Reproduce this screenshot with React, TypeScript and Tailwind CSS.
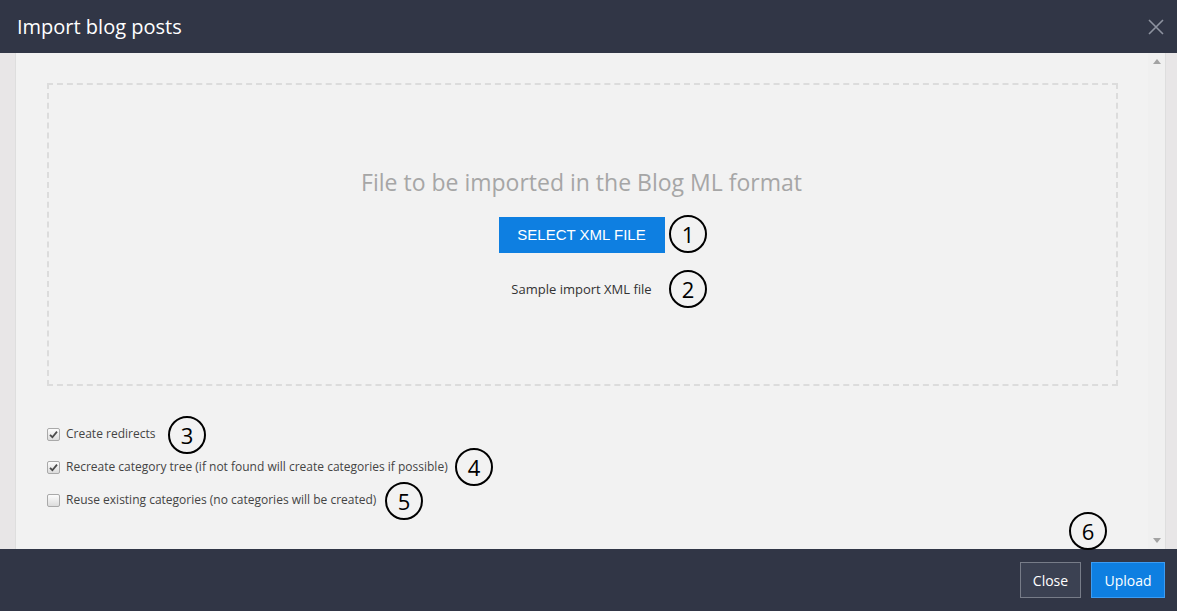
import React from 'react';

const Marker = ({ n, x, y }: { n: number; x: number; y: number }) => (
  <div
    className="absolute w-[38px] h-[38px] rounded-full border-2 border-black flex items-center justify-center text-[22px] text-black leading-none pointer-events-none"
    style={{ left: x - 19, top: y - 19 }}
  >
    {n}
  </div>
);

const Check = ({ checked, label }: { checked: boolean; label: string }) => (
  <label className="flex items-center h-[20px]">
    <span className="w-[13px] h-[13px] rounded-[2px] border border-[#a9a9a9] bg-gradient-to-b from-[#fcfcfc] to-[#dcdcdc] flex items-center justify-center">
      {checked && (
        <svg width="9" height="9" viewBox="0 0 9 9">
          <path d="M1 4.8 L3.4 7.2 L8 1.6" fill="none" stroke="#4a4a4a" strokeWidth="1.8" />
        </svg>
      )}
    </span>
    <span className="ml-[6px] text-[12px] text-[#444]">{label}</span>
  </label>
);

const App = () => {
  return (
    <div className="relative w-full h-screen flex flex-col overflow-hidden" style={{ fontFamily: '"Open Sans", sans-serif' }}>
      <header className="h-[53px] shrink-0 bg-[#313646] flex items-center justify-between pl-[17px] pr-[13px]">
        <h1 className="text-[20px] text-white">Import blog posts</h1>
        <svg width="16" height="16" viewBox="0 0 16 16">
          <path d="M1 1 L15 15 M15 1 L1 15" stroke="#8e93a0" strokeWidth="1.6" />
        </svg>
      </header>

      <div className="flex-1 flex min-h-0">
        <div className="w-[16px] bg-[#e8e6e7] border-r border-[#dedede]" />
        <main className="flex-1 bg-[#f2f2f2] pl-[31px] pr-[30px] pt-[30px]">
          <div className="h-[303px] border-2 border-dashed border-[#dcdcdc] flex flex-col items-center pt-[82px] pr-[2px]">
            <p className="text-[23px] leading-[30px] text-[#a6a6a6]">File to be imported in the Blog ML format</p>
            <button
              className="mt-[20px] w-[166px] h-[36px] bg-[#0e7fe1] text-white text-[15px] uppercase"
              style={{ fontFamily: '"Liberation Sans", Arial, sans-serif' }}
            >
              Select XML file
            </button>
            <a className="mt-[26px] text-[13px] leading-[20px] text-[#333]">Sample import XML file</a>
          </div>
          <div className="mt-[38px] flex flex-col gap-[13px]">
            <Check checked label="Create redirects" />
            <Check checked label="Recreate category tree (if not found will create categories if possible)" />
            <Check checked={false} label="Reuse existing categories (no categories will be created)" />
          </div>
        </main>
        <div className="w-[17px] bg-[#f0f0f0] flex flex-col items-center justify-between py-[6px]">
          <svg width="8" height="5" viewBox="0 0 8 5"><path d="M0 5 L4 0 L8 5Z" fill="#a3a3a3" /></svg>
          <svg width="8" height="5" viewBox="0 0 8 5"><path d="M0 0 L4 5 L8 0Z" fill="#a3a3a3" /></svg>
        </div>
        <div className="w-[12px] bg-[#e8e6e7] border-l border-[#dedede]" />
      </div>

      <footer className="h-[62px] shrink-0 bg-[#313646] flex items-center justify-end gap-[10px] pr-[12px]">
        <button className="h-[36px] w-[61px] bg-[#3b4152] border border-[#777c88] text-white text-[14px]">Close</button>
        <button className="h-[36px] w-[74px] bg-[#0e7fe1] border border-[#3c9cf2] text-white text-[14px]">Upload</button>
      </footer>

      <Marker n={1} x={688} y={234} />
      <Marker n={2} x={688} y={289} />
      <Marker n={3} x={187} y={435} />
      <Marker n={4} x={474} y={467} />
      <Marker n={5} x={404} y={501} />
      <Marker n={6} x={1088} y={531} />
    </div>
  );
};

export default App;
